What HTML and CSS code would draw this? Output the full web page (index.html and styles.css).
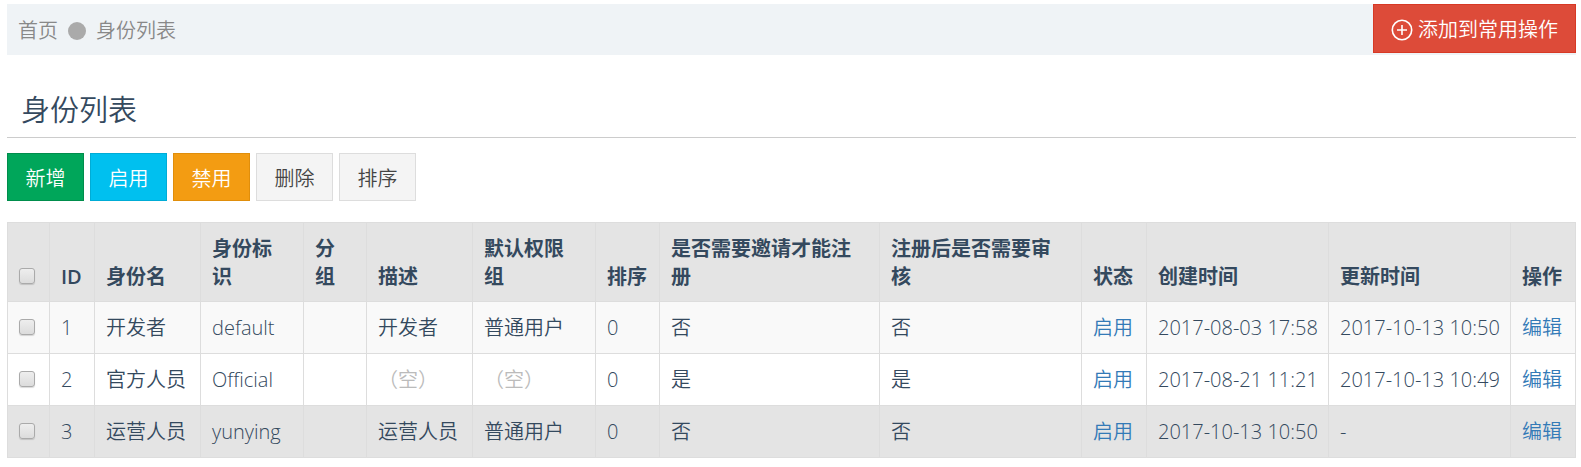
FILE: index.html
```html
<!DOCTYPE html>
<html lang="zh-CN">
<head>
    <meta charset="UTF-8">
    <meta name="viewport" content="width=device-width, initial-scale=1.0">
    <title>身份列表</title>
    <link rel="stylesheet" href="styles.css">
</head>
<body>

<div class="topbar">
    <nav class="breadcrumb">
        <a href="#">首页</a>
        <span class="dot"></span>
        <span>身份列表</span>
    </nav>
    <button type="button" class="btn btn-danger">
        <svg width="22" height="22" viewBox="0 0 22 22" fill="none" stroke="currentColor" stroke-width="1.6">
            <circle cx="11" cy="11" r="9.7"/>
            <path d="M11 6v10M6 11h10"/>
        </svg>
        添加到常用操作
    </button>
</div>

<h1 class="title">身份列表</h1>

<div class="toolbar">
    <button type="button" class="btn btn-success">新增</button>
    <button type="button" class="btn btn-info">启用</button>
    <button type="button" class="btn btn-warning">禁用</button>
    <button type="button" class="btn btn-default">删除</button>
    <button type="button" class="btn btn-default">排序</button>
</div>

<table class="table">
    <colgroup>
        <col class="col-check">
        <col class="col-id">
        <col class="col-name">
        <col class="col-key">
        <col class="col-group">
        <col class="col-name">
        <col class="col-auth">
        <col class="col-sort">
        <col class="col-invite">
        <col class="col-verify">
        <col class="col-link">
        <col class="col-time">
        <col class="col-time">
        <col class="col-link">
    </colgroup>
    <thead>
        <tr>
            <th><input type="checkbox" aria-label="全选"></th>
            <th>ID</th>
            <th>身份名</th>
            <th>身份标识</th>
            <th>分组</th>
            <th>描述</th>
            <th>默认权限组</th>
            <th>排序</th>
            <th>是否需要邀请才能注册</th>
            <th>注册后是否需要审核</th>
            <th>状态</th>
            <th>创建时间</th>
            <th>更新时间</th>
            <th>操作</th>
        </tr>
    </thead>
    <tbody>
        <tr>
            <td><input type="checkbox" aria-label="开发者"></td>
            <td>1</td>
            <td>开发者</td>
            <td>default</td>
            <td></td>
            <td>开发者</td>
            <td>普通用户</td>
            <td>0</td>
            <td>否</td>
            <td>否</td>
            <td><a href="#">启用</a></td>
            <td>2017-08-03 17:58</td>
            <td>2017-10-13 10:50</td>
            <td><a href="#">编辑</a></td>
        </tr>
        <tr>
            <td><input type="checkbox" aria-label="官方人员"></td>
            <td>2</td>
            <td>官方人员</td>
            <td>Official</td>
            <td></td>
            <td><span class="empty">（空）</span></td>
            <td><span class="empty">（空）</span></td>
            <td>0</td>
            <td>是</td>
            <td>是</td>
            <td><a href="#">启用</a></td>
            <td>2017-08-21 11:21</td>
            <td>2017-10-13 10:49</td>
            <td><a href="#">编辑</a></td>
        </tr>
        <tr class="active">
            <td><input type="checkbox" aria-label="运营人员"></td>
            <td>3</td>
            <td>运营人员</td>
            <td>yunying</td>
            <td></td>
            <td>运营人员</td>
            <td>普通用户</td>
            <td>0</td>
            <td>否</td>
            <td>否</td>
            <td><a href="#">启用</a></td>
            <td>2017-10-13 10:50</td>
            <td>-</td>
            <td><a href="#">编辑</a></td>
        </tr>
    </tbody>
</table>

</body>
</html>
```
FILE: styles.css
```css
* {
    box-sizing: border-box;
}
body {
    margin: 0;
    padding: 4px 5px 9px 7px;
    font-family: "Open Sans", "Noto Sans CJK SC", sans-serif;
    font-size: 20px;
    font-weight: 350;
    line-height: 28px;
    color: #34495e;
    background-color: #fff;
}
a {
    color: #337ab7;
    text-decoration: none;
}
.topbar {
    display: flex;
    justify-content: space-between;
    align-items: flex-start;
    height: 51px;
    background-color: #eff3f6;
}
.breadcrumb {
    display: flex;
    align-items: center;
    gap: 10px;
    padding: 13px 11px 10px;
    color: #888;
}
.breadcrumb a {
    color: #888;
}
.dot {
    width: 18px;
    height: 18px;
    border-radius: 50%;
    background-color: #aaa;
}
.btn {
    display: flex;
    align-items: center;
    justify-content: center;
    gap: 5px;
    min-width: 77px;
    height: 48px;
    padding: 4px 17px 0;
    border: 1px solid;
    border-radius: 0;
    font: inherit;
    cursor: pointer;
}
.btn-danger {
    height: 49px;
    padding: 2px 17px 0;
    background-color: #dd4b39;
    border-color: #d73925;
    color: #fff;
}
.btn-success {
    background-color: #00a65a;
    border-color: #008d4c;
    color: #fff;
}
.btn-info {
    background-color: #00c0ef;
    border-color: #00acd6;
    color: #fff;
}
.btn-warning {
    background-color: #f39c12;
    border-color: #e08e0b;
    color: #fff;
}
.btn-default {
    background-color: #f4f4f4;
    border-color: #ddd;
    color: #444;
}
.title {
    margin: 0 0 15px;
    padding: 35px 14px 7px;
    border-bottom: 1px solid #ccc;
    font-size: 29px;
    font-weight: 350;
    line-height: 40px;
}
.toolbar {
    display: flex;
    gap: 6px;
    margin-bottom: 21px;
}
.table {
    width: 100%;
    table-layout: fixed;
    border-collapse: collapse;
}
.table th,
.table td {
    padding: 12px 10px 11px 11px;
    border: 1px solid #ddd;
    text-align: left;
}
.table th {
    padding: 12px 12px 10px 11px;
    background-color: #e4e4e4;
    font-weight: 600;
    vertical-align: bottom;
}
.table td {
    vertical-align: top;
    white-space: nowrap;
}
.table tbody tr:nth-child(odd) {
    background-color: #f9f9f9;
}
.table tbody tr.active {
    background-color: #e4e4e4;
}
.table input {
    appearance: none;
    display: block;
    width: 16px;
    height: 16px;
    margin: 5px 0 7px;
    border: 1px solid #aaa;
    border-radius: 3px;
    background: linear-gradient(#eee, #dcdcdc);
    box-shadow: 0 1px 1px rgba(0, 0, 0, 0.15);
}
.table input:checked {
    background: #337ab7;
}
.empty {
    color: #bbb;
}
.col-check {
    width: 42px;
}
.col-id {
    width: 45px;
}
.col-name {
    width: 106px;
}
.col-key {
    width: 103px;
}
.col-group {
    width: 63px;
}
.col-auth {
    width: 123px;
}
.col-sort {
    width: 64px;
}
.col-invite {
    width: 220px;
}
.col-verify {
    width: 202px;
}
.col-link {
    width: 65px;
}
.col-time {
    width: 182px;
}
```
